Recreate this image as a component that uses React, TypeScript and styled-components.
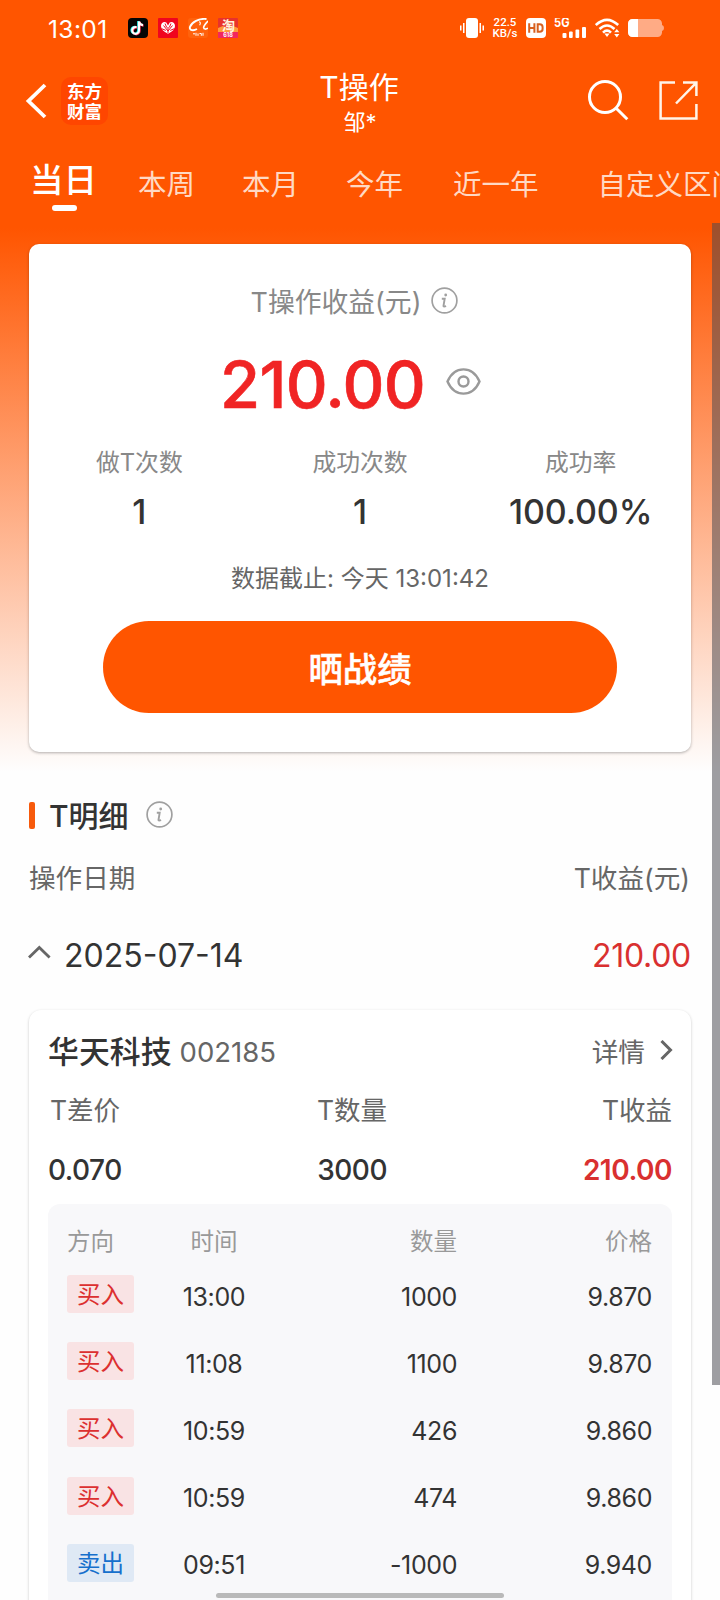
import React from 'react';
import styled, { createGlobalStyle } from 'styled-components';

const GlobalStyle = createGlobalStyle`
  * { box-sizing: border-box; }
  html, body { margin: 0; padding: 0; background: #fefefe; }
  body {
    font-family: Inter, "Noto Sans CJK SC", sans-serif;
    color: #333;
    overflow: hidden;
  }
`;

const Screen = styled.div`
  position: relative;
  width: 720px;
  height: 1600px;
  overflow: hidden;
  background: linear-gradient(to bottom, #ff5500 0, #ff5500 228px, #fefefe 772px);
`;

/* ---------- Status bar ---------- */

const StatusBar = styled.div`
  display: flex;
  align-items: center;
  justify-content: space-between;
  height: 56px;
  padding: 0 56px 0 48px;
  color: #fff;
`;

const StatusGroup = styled.div<{ $gap: number }>`
  display: flex;
  align-items: center;
  gap: ${(p) => p.$gap}px;
`;

const Clock = styled.span`
  width: 70px;
  font-size: 24.5px;
  line-height: 30px;
  padding-top: 2px;
  letter-spacing: 0.4px;
`;

const NetSpeed = styled.div`
  display: flex;
  flex-direction: column;
  align-items: center;
  width: 26px;
  font: 500 11.5px/11px Roboto, Inter, sans-serif;
  white-space: nowrap;
`;

/* ---------- Header ---------- */

const Header = styled.header`
  display: grid;
  grid-template-columns: 240px 240px 240px;
  align-items: center;
  height: 94px;
  color: #fff;
`;

const HeaderLeft = styled.div`
  display: flex;
  align-items: center;
  gap: 14px;
  padding: 0 0 5px 25px;
`;

const BrandLogo = styled.div`
  width: 47px;
  height: 48px;
  padding: 4px 0 0;
  border-radius: 10px;
  background: #ff4600;
  font: 700 17.5px/20px "Noto Sans CJK SC", sans-serif;
  text-align: center;
`;

const HeaderTitle = styled.div`
  text-align: center;
`;

const Title = styled.h1`
  margin: 0 2px 0 0;
  font-size: 30px;
  line-height: 38px;
  font-weight: 400;
`;

const Subtitle = styled.div`
  font-size: 22px;
  line-height: 32px;
`;

const HeaderActions = styled.div`
  display: flex;
  align-items: center;
  justify-content: flex-end;
  gap: 30px;
  padding: 0 22px 6px 0;
`;

/* ---------- Tabs ---------- */

const Tabs = styled.nav`
  display: flex;
  align-items: center;
  height: 68px;
  padding-left: 30px;
  overflow: hidden;
`;

const Tab = styled.div<{ $active?: boolean; $gap: number }>`
  position: relative;
  flex: none;
  margin-left: ${(p) => p.$gap}px;
  padding: ${(p) => (p.$active ? '0 0 8px' : '2px 0 0')};
  font-size: ${(p) => (p.$active ? 33.5 : 28.5)}px;
  line-height: 40px;
  font-weight: ${(p) => (p.$active ? 500 : 400)};
  color: ${(p) => (p.$active ? '#fff' : '#ffd9c4')};
  white-space: nowrap;
`;

const TabMarker = styled.span`
  position: absolute;
  left: 22px;
  bottom: -3px;
  width: 25px;
  height: 6px;
  border-radius: 3px;
  background: #fff;
`;

/* ---------- Summary card ---------- */

const SummaryCard = styled.section`
  display: flex;
  flex-direction: column;
  align-items: center;
  height: 508px;
  margin: 26px 29px 0;
  padding-top: 38px;
  border-radius: 10px;
  background: #fff;
  box-shadow: 0 1px 3px rgba(0, 0, 0, 0.3);
`;

const SummaryLabel = styled.div`
  display: flex;
  align-items: center;
  gap: 10px;
  height: 40px;
  padding-right: 11px;
  font-size: 26.8px;
  line-height: 40px;
  color: #888;

  svg { margin-top: -4px; }
`;

const SummaryAmount = styled.div`
  display: flex;
  align-items: center;
  gap: 21px;
  height: 80px;
  margin-top: 23px;
  padding-right: 19px;
  font-size: 65px;
  line-height: 80px;
  font-weight: 500;
  letter-spacing: -0.7px;
  -webkit-text-stroke: 0.6px #f02424;
  color: #f02424;

  svg { margin-top: -8px; }
`;

const Stats = styled.div`
  display: grid;
  grid-template-columns: repeat(3, 1fr);
  width: 100%;
  margin-top: 20px;
  text-align: center;
`;

const StatLabel = styled.div`
  font-size: 23.8px;
  line-height: 36px;
  color: #888;
`;

const StatValue = styled.div`
  margin-top: 10px;
  font-size: 34px;
  line-height: 42px;
  font-weight: 500;
  letter-spacing: -0.1px;
  color: #333;
`;

const Deadline = styled.div`
  margin-top: 28px;
  font-size: 24px;
  line-height: 36px;
  color: #666;
`;

const ShareButton = styled.button`
  width: 514px;
  height: 92px;
  margin-top: 24px;
  padding: 5px 0 0;
  border: 0;
  border-radius: 46px;
  background: #ff5500;
  color: #fff;
  font: 500 34.3px/40px Inter, "Noto Sans CJK SC", sans-serif;
  -webkit-text-stroke: 0.5px #fff;
`;

/* ---------- Detail section ---------- */

const SectionTitle = styled.h2`
  display: flex;
  align-items: center;
  height: 40px;
  margin: 44px 29px 0;
  font-size: 30px;
  line-height: 40px;
  font-weight: 500;

  &::before {
    content: '';
    width: 6px;
    height: 27px;
    margin: -1px 14px 0 0;
    border-radius: 2px;
    background: #f75a0c;
  }

  svg { margin: -3px 0 0 17px; }
`;

const ColumnHeads = styled.div`
  display: flex;
  justify-content: space-between;
  margin: 22px 30px 0 29px;
  font-size: 26.6px;
  line-height: 40px;
  color: #666;
`;

const DayRow = styled.div`
  display: flex;
  align-items: center;
  height: 44px;
  margin: 36px 29px 0 28px;
  font-size: 32px;
  line-height: 44px;

  svg { margin-top: -8px; }
`;

const DayDate = styled.span`
  flex: 1;
  margin-left: 13px;
`;

const DayProfit = styled.span`
  letter-spacing: -0.3px;
  color: #d93030;
`;

const StockCard = styled.section`
  height: 640px;
  margin: 32px 29px 0;
  padding: 20px 19px 0;
  border-radius: 12px;
  background: #fff;
  box-shadow: 0 1px 3px rgba(0, 0, 0, 0.22);
`;

const StockHead = styled.div`
  display: flex;
  align-items: center;
  height: 44px;
`;

const StockName = styled.span`
  font-size: 30.9px;
  line-height: 44px;
  font-weight: 500;
`;

const StockCode = styled.span`
  flex: 1;
  margin-left: 8px;
  font-size: 27.5px;
  line-height: 44px;
  color: #666;
`;

const DetailLink = styled.span`
  display: flex;
  align-items: center;
  gap: 15px;
  margin-right: -1px;
  font-size: 26.7px;
  line-height: 44px;
  color: #666;

  svg { margin-top: -4px; }
`;

const Metrics = styled.div<{ $strong?: boolean }>`
  display: grid;
  grid-template-columns: 169px 170px 1fr;
  margin-top: ${(p) => (p.$strong ? 20 : 16)}px;
  font-size: ${(p) => (p.$strong ? 28 : 26.5)}px;
  line-height: 40px;
  font-weight: ${(p) => (p.$strong ? 500 : 400)};
  letter-spacing: ${(p) => (p.$strong ? -0.5 : 0)}px;
  color: ${(p) => (p.$strong ? '#333' : '#666')};
`;

const Metric = styled.span<{ $end?: boolean; $up?: boolean; $inset?: boolean }>`
  padding-left: ${(p) => (p.$inset ? 2 : 0)}px;
  text-align: ${(p) => (p.$end ? 'right' : 'left')};
  ${(p) => p.$up && 'color: #d93030; font-weight: 600;'}
`;

const TradeTable = styled.div`
  height: 420px;
  margin-top: 14px;
  padding: 18px 20px 0 19px;
  border-radius: 12px;
  background: #f8f8fa;
`;

const TradeRow = styled.div<{ $head?: boolean }>`
  display: grid;
  grid-template-columns: 67px 160px 163px 1fr;
  align-items: center;
  height: ${(p) => (p.$head ? 41 : 67.2)}px;
  padding-bottom: ${(p) => (p.$head ? 2 : 0)}px;
  font-size: ${(p) => (p.$head ? 23.5 : 25)}px;
  line-height: 36px;
  letter-spacing: ${(p) => (p.$head ? 0 : -0.4)}px;
  color: ${(p) => (p.$head ? '#999' : '#333')};
`;

const TimeCell = styled.span`
  text-align: center;
`;

const NumberCell = styled.span`
  text-align: right;
`;

const SideTag = styled.span<{ $sell?: boolean }>`
  height: 38px;
  margin-top: -5px;
  border-radius: 3px;
  background: ${(p) => (p.$sell ? '#dfe9f5' : '#f9e3e4')};
  color: ${(p) => (p.$sell ? '#1670cc' : '#dc3030')};
  font-size: 23.5px;
  line-height: 40px;
  letter-spacing: 0;
  text-align: center;
`;

const ScrollThumb = styled.div`
  position: absolute;
  right: 0;
  top: 223px;
  width: 8px;
  height: 1162px;
  background: rgba(76, 76, 84, 0.54);
`;

const HomeIndicator = styled.div`
  position: absolute;
  left: 216px;
  bottom: 2px;
  width: 288px;
  height: 5px;
  border-radius: 3px;
  background: #b9b9b9;
`;

/* ---------- Icons ---------- */

const notePath = 'M8.600 9.200a3.400 3.400 0 1 0 2.400 3.400V3.400c.3 2.200 1.700 3.500 4 3.700';

const MusicNoteApp = () => (
  <svg width="20" height="20" viewBox="0 0 20 20">
    <rect width="20" height="20" rx="4" fill="#050505" />
    <g fill="none" strokeWidth="2.1">
      <path d={notePath} stroke="#25f4ee" transform="translate(-.8 -.3)" />
      <path d={notePath} stroke="#fe2c55" transform="translate(.6 .5)" />
      <path d={notePath} stroke="#fff" />
    </g>
  </svg>
);

const PetalApp = () => (
  <svg width="20" height="20" viewBox="0 0 20 20">
    <rect width="20" height="20" rx="1" fill="#f0051e" />
    <path d="M10 15.800C5.500 13.500 3 11 3 8 3 4.200 6.500 3.300 8.300 4.500L10 7.500 11.700 4.500C13.500 3.300 17 4.200 17 8 17 11 14.500 13.500 10 15.800z" fill="#fff" />
    <path d="M10 15V9M10 13 5.500 7.500M10 13l4.500-5.500M7.800 12.400 3.500 10.600M12.200 12.400l4.300-1.800M8.700 9.500 7 5.500M11.300 9.500 13 5.500" stroke="#f0051e" strokeWidth="1" fill="none" />
  </svg>
);

const WholesaleApp = () => (
  <svg width="20" height="20" viewBox="0 0 20 20" fill="none" stroke="#fff">
    <rect width="20" height="20" rx="3" fill="#ff620c" stroke="none" />
    <path d="M18.500 1C10.500.2 4 4 2 8.800c-1 3.800 3.500 4.200 7 2.200" strokeWidth="1.900" />
    <path d="M11 3.800q2.400.6.600 3.400" strokeWidth="1.100" />
    <path d="M20 3c-2.500 2.500-4.200 4.500-4.400 6.500.2 2 2.600 2 4.400.6" strokeWidth="1.600" />
    <path d="M5 15.800h2M8 14.800v3M10 15.500v2.300M11.500 15.500h1.800v2.300M15 14.800v3" strokeWidth="1" />
  </svg>
);

const ShoppingApp = () => (
  <svg width="20" height="20" viewBox="0 0 20 20">
    <rect width="20" height="20" rx="1" fill="#e8322c" />
    <path d="M0 10 5 8l5 3 5-3 5 2v5H0z" fill="#ff9a3d" />
    <rect y="14" width="20" height="6" fill="#f2275e" />
    <text x="10.500" y="12.300" fontSize="13" fontWeight="700" fill="#fff5df" textAnchor="middle" fontFamily="Noto Sans CJK SC">淘</text>
    <text x="10" y="19" fontSize="5.500" fontWeight="700" fill="#fff" textAnchor="middle">618</text>
  </svg>
);

const VibrateIcon = () => (
  <svg width="24" height="20" viewBox="0 0 24 20" fill="#fff">
    <rect x="6" width="12" height="20" rx="3" />
    <rect x="3" y="5" width="1.500" height="10" />
    <rect x="19.500" y="5" width="1.500" height="10" />
    <rect x="0" y="7.500" width="1.500" height="5" />
    <rect x="22.500" y="7.500" width="1.500" height="5" />
  </svg>
);

const HdIcon = () => (
  <svg width="20" height="20" viewBox="0 0 20 20">
    <rect width="20" height="20" rx="4" fill="#fff" />
    <path d="M3.200 5.200v9.600M8.400 5.200v9.600M3.200 10H8.400M11.700 6.200v7.600h2q2.900 0 2.900-2.800V9q0-2.800-2.900-2.800z" stroke="#d8601f" strokeWidth="2" fill="none" />
  </svg>
);

const SignalIcon = () => (
  <svg width="33" height="20" viewBox="0 0 33 20" fill="#fff">
    <text x="0" y="9.400" fontSize="12.500" fontWeight="700" textLength="15.500" lengthAdjust="spacingAndGlyphs">5G</text>
    <rect x="8.500" y="15" width="4" height="5" rx="1" />
    <rect x="15" y="13.500" width="3.700" height="6.500" rx="1" />
    <rect x="21.500" y="11.500" width="3.700" height="8.500" rx="1" />
    <rect x="28" y="9" width="4" height="11" rx="1" />
  </svg>
);

const WifiIcon = () => (
  <svg width="25" height="20" viewBox="0 0 25 20" fill="none" stroke="#fff" strokeWidth="2.600">
    <path d="M.8 7Q12 -3.400 23.200 7" />
    <path d="M4.500 11Q12 4 19.500 11" />
    <path d="M8 14.600Q12 10.800 16 14.600" />
    <path d="M9.400 15.600h5.200L12 18.900z" fill="#fff" stroke="none" />
    <path d="M19.200 14.300h5.200L21.800 11zM19.200 16h5.200l-2.600 3.400z" fill="#fff" stroke="none" />
  </svg>
);

const BatteryIcon = () => (
  <svg width="36" height="18" viewBox="0 0 36 18">
    <path d="M4.500 0h25A4.500 4.500 0 0 1 34 4.500V6q2 .5 2 3t-2 3v1.500a4.500 4.500 0 0 1-4.500 4.500h-25A4.500 4.500 0 0 1 0 13.500v-9A4.500 4.500 0 0 1 4.500 0z" fill="#ffab85" />
    <path d="M4.500 0H10v18H4.500A4.500 4.500 0 0 1 0 13.500v-9A4.500 4.500 0 0 1 4.500 0z" fill="#fff" />
  </svg>
);

const BackIcon = () => (
  <svg width="22" height="36" viewBox="0 0 22 36" fill="none" stroke="#fff" strokeWidth="3.800">
    <path d="M20 2 3.500 18 20 34" />
  </svg>
);

const SearchIcon = () => (
  <svg width="42" height="42" viewBox="0 0 42 42" fill="none" stroke="#fff" strokeWidth="3">
    <circle cx="18" cy="18" r="15.500" />
    <path d="M28.700 28.700 40.300 40.300" />
  </svg>
);

const ShareOutIcon = () => (
  <svg width="39" height="39" viewBox="0 0 39 39" fill="none" stroke="#fff4e8" strokeWidth="2.500">
    <path d="M16 1.600H1.600v35.800h35.800V23M24 1.600h13.400V15M37.400 1.600 17 22.500" />
  </svg>
);

const InfoIcon = () => (
  <svg width="27" height="27" viewBox="0 0 27 27" fill="none" stroke="#a0a0a0" strokeWidth="1.700">
    <circle cx="13.500" cy="13.500" r="12.400" />
    <circle cx="14.700" cy="8" r="1.400" fill="#a0a0a0" stroke="none" />
    <path d="M10.800 11.700h2.900l-1.200 7.200q-.1 1.100 2.600.2" strokeWidth="1.900" />
  </svg>
);

const EyeIcon = () => (
  <svg width="35" height="27" viewBox="0 0 35 27" fill="none" stroke="#9a9a9a" strokeWidth="2.400">
    <path d="M1.500 13.500C5 5.500 11 1.400 17.500 1.400S30 5.500 33.500 13.500C30 21.500 24 25.600 17.500 25.600S5 21.500 1.500 13.500z" />
    <circle cx="17.500" cy="13.500" r="5" />
  </svg>
);

const CollapseIcon = () => (
  <svg width="23" height="14" viewBox="0 0 23 14" fill="none" stroke="#666" strokeWidth="2.800">
    <path d="M1 12.500 11.300 2.400 21.600 12.500" />
  </svg>
);

const MoreIcon = () => (
  <svg width="13" height="20" viewBox="0 0 13 20" fill="none" stroke="#666" strokeWidth="3">
    <path d="M1.500 1 10.500 10 1.500 19" />
  </svg>
);

/* ---------- Data ---------- */

const tabs = [
  { label: '当日', gap: 0 },
  { label: '本周', gap: 41 },
  { label: '本月', gap: 47 },
  { label: '今年', gap: 47 },
  { label: '近一年', gap: 50 },
  { label: '自定义区间', gap: 59 },
];

const stats = [
  { label: '做T次数', value: '1' },
  { label: '成功次数', value: '1' },
  { label: '成功率', value: '100.00%' },
];

const trades = [
  { side: '买入', time: '13:00', amount: '1000', price: '9.870' },
  { side: '买入', time: '11:08', amount: '1100', price: '9.870' },
  { side: '买入', time: '10:59', amount: '426', price: '9.860' },
  { side: '买入', time: '10:59', amount: '474', price: '9.860' },
  { side: '卖出', time: '09:51', amount: '-1000', price: '9.940' },
];

export default function App() {
  return (
    <>
      <GlobalStyle />
      <Screen>
        <StatusBar>
          <StatusGroup $gap={10}>
            <Clock>13:01</Clock>
            <MusicNoteApp />
            <PetalApp />
            <WholesaleApp />
            <ShoppingApp />
          </StatusGroup>
          <StatusGroup $gap={8}>
            <VibrateIcon />
            <NetSpeed>
              <span>22.5</span>
              <span>KB/s</span>
            </NetSpeed>
            <HdIcon />
            <SignalIcon />
            <WifiIcon />
            <BatteryIcon />
          </StatusGroup>
        </StatusBar>

        <Header>
          <HeaderLeft>
            <BackIcon />
            <BrandLogo>东方<br />财富</BrandLogo>
          </HeaderLeft>
          <HeaderTitle>
            <Title>T操作</Title>
            <Subtitle>邹*</Subtitle>
          </HeaderTitle>
          <HeaderActions>
            <SearchIcon />
            <ShareOutIcon />
          </HeaderActions>
        </Header>

        <Tabs>
          {tabs.map((tab, i) => (
            <Tab key={tab.label} $active={i === 0} $gap={tab.gap}>
              {tab.label}
              {i === 0 && <TabMarker />}
            </Tab>
          ))}
        </Tabs>

        <SummaryCard>
          <SummaryLabel>T操作收益(元)<InfoIcon /></SummaryLabel>
          <SummaryAmount>210.00<EyeIcon /></SummaryAmount>
          <Stats>
            {stats.map((s) => (
              <div key={s.label}>
                <StatLabel>{s.label}</StatLabel>
                <StatValue>{s.value}</StatValue>
              </div>
            ))}
          </Stats>
          <Deadline>数据截止: 今天 13:01:42</Deadline>
          <ShareButton>晒战绩</ShareButton>
        </SummaryCard>

        <SectionTitle>T明细<InfoIcon /></SectionTitle>
        <ColumnHeads>
          <span>操作日期</span>
          <span>T收益(元)</span>
        </ColumnHeads>
        <DayRow>
          <CollapseIcon />
          <DayDate>2025-07-14</DayDate>
          <DayProfit>210.00</DayProfit>
        </DayRow>

        <StockCard>
          <StockHead>
            <StockName>华天科技</StockName>
            <StockCode>002185</StockCode>
            <DetailLink>详情<MoreIcon /></DetailLink>
          </StockHead>
          <Metrics>
            <Metric $inset>T差价</Metric>
            <Metric $end>T数量</Metric>
            <Metric $end>T收益</Metric>
          </Metrics>
          <Metrics $strong>
            <Metric>0.070</Metric>
            <Metric $end>3000</Metric>
            <Metric $end $up>210.00</Metric>
          </Metrics>
          <TradeTable>
            <TradeRow $head>
              <span>方向</span>
              <TimeCell>时间</TimeCell>
              <NumberCell>数量</NumberCell>
              <NumberCell>价格</NumberCell>
            </TradeRow>
            {trades.map((t, i) => (
              <TradeRow key={i}>
                <SideTag $sell={t.side === '卖出'}>{t.side}</SideTag>
                <TimeCell>{t.time}</TimeCell>
                <NumberCell>{t.amount}</NumberCell>
                <NumberCell>{t.price}</NumberCell>
              </TradeRow>
            ))}
          </TradeTable>
        </StockCard>

        <ScrollThumb />
        <HomeIndicator />
      </Screen>
    </>
  );
}
